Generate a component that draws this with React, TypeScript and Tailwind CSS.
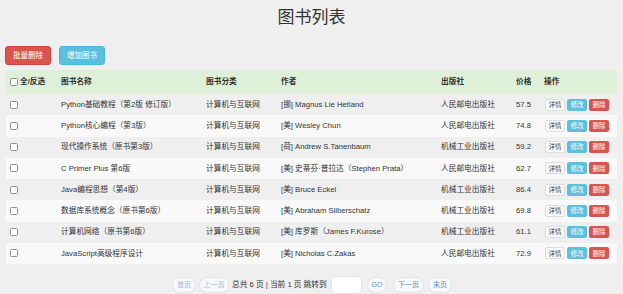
import React from "react";

interface Book {
  name: string;
  category: string;
  author: string;
  publisher: string;
  price: string;
}

const books: Book[] = [
  { name: "Python基础教程（第2版 修订版）", category: "计算机与互联网", author: "[挪] Magnus Lie Hetland", publisher: "人民邮电出版社", price: "57.5" },
  { name: "Python核心编程（第3版）", category: "计算机与互联网", author: "[美] Wesley Chun", publisher: "人民邮电出版社", price: "74.8" },
  { name: "现代操作系统（原书第3版）", category: "计算机与互联网", author: "[荷] Andrew S.Tanenbaum", publisher: "机械工业出版社", price: "59.2" },
  { name: "C Primer Plus 第6版", category: "计算机与互联网", author: "[美] 史蒂芬·普拉达（Stephen Prata）", publisher: "人民邮电出版社", price: "62.7" },
  { name: "Java编程思想（第4版）", category: "计算机与互联网", author: "[美] Bruce Eckel", publisher: "机械工业出版社", price: "86.4" },
  { name: "数据库系统概念（原书第6版）", category: "计算机与互联网", author: "[美] Abraham Silberschatz", publisher: "机械工业出版社", price: "69.8" },
  { name: "计算机网络（原书第6版）", category: "计算机与互联网", author: "[美] 库罗斯（James F.Kurose）", publisher: "机械工业出版社", price: "61.1" },
  { name: "JavaScript高级程序设计", category: "计算机与互联网", author: "[美] Nicholas C.Zakas", publisher: "人民邮电出版社", price: "72.9" },
];

const Check = () => (
  <span className="inline-block w-[8px] h-[8px] border border-[#8f8f8f] rounded-[1.5px] bg-white align-middle" />
);

const Pill = ({ label, w, faded }: { label: string; w: string; faded?: boolean }) => (
  <span
    className={`inline-flex items-center justify-center h-[16px] rounded-full bg-[#f8f8f8] border border-[#e4e4e4] text-[7px] ${w} ${
      faded ? "text-[#9bbbd8]" : "text-[#5b8fc4]"
    }`}
  >
    {label}
  </span>
);

export default function App() {
  return (
    <div className="w-[623px] h-[294px] bg-[#efefef] text-[#333] font-['Liberation_Sans','Noto_Sans_CJK_SC',sans-serif] overflow-hidden">
      <h1 className="pt-[5px] text-center text-[17px] leading-[22px] font-normal text-[#333] font-['Noto_Sans_CJK_SC',sans-serif]">
        图书列表
      </h1>

      <div className="flex gap-[8px] pl-[5px] mt-[19px]">
        <button className="w-[46px] h-[19px] rounded-[3px] bg-[#d9534f] border border-[#d43f3a] text-white text-[7.5px]">
          批量删除
        </button>
        <button className="w-[46px] h-[19px] rounded-[3px] bg-[#5bc0de] border border-[#46b8da] text-white text-[7.5px]">
          增加图书
        </button>
      </div>

      <table className="ml-[6px] mt-[5px] w-[611px] table-fixed border-collapse text-[7.7px]">
        <colgroup>
          <col className="w-[51px]" />
          <col className="w-[145px]" />
          <col className="w-[75px]" />
          <col className="w-[160px]" />
          <col className="w-[75px]" />
          <col className="w-[28px]" />
          <col className="w-[77px]" />
        </colgroup>
        <thead>
          <tr className="h-[24px] bg-[#dff0d8] font-bold text-left">
            <th className="px-[4px] whitespace-nowrap">
              <span className="flex items-center gap-[2px]">
                <Check />
                全/反选
              </span>
            </th>
            <th className="px-[4px]">图书名称</th>
            <th className="px-[4px]">图书分类</th>
            <th className="px-[4px]">作者</th>
            <th className="px-[4px]">出版社</th>
            <th className="px-[4px]">价格</th>
            <th className="px-[4px]">操作</th>
          </tr>
        </thead>
        <tbody>
          {books.map((b, i) => (
            <tr key={b.name} className={`h-[21.25px] ${i % 2 === 1 ? "bg-[#f9f9f9]" : ""}`}>
              <td className="px-[4px]">
                <span className="flex items-center">
                  <Check />
                </span>
              </td>
              <td className="px-[4px] whitespace-nowrap">{b.name}</td>
              <td className="px-[4px] whitespace-nowrap">{b.category}</td>
              <td className="px-[4px] whitespace-nowrap">{b.author}</td>
              <td className="px-[4px] whitespace-nowrap">{b.publisher}</td>
              <td className="px-[4px]">{b.price}</td>
              <td className="px-[4px]">
                <span className="flex gap-[2px] pl-[1px]">
                  <span className="w-[20px] h-[12px] flex items-center justify-center rounded-[2px] bg-white border border-[#ddd] text-[6.5px] text-[#333]">
                    详情
                  </span>
                  <span className="w-[20px] h-[12px] flex items-center justify-center rounded-[2px] bg-[#5bc0de] text-[6.5px] text-white">
                    修改
                  </span>
                  <span className="w-[20px] h-[12px] flex items-center justify-center rounded-[2px] bg-[#d9534f] text-[6.5px] text-white">
                    删除
                  </span>
                </span>
              </td>
            </tr>
          ))}
        </tbody>
      </table>

      <div className="flex items-center pl-[172px] mt-[12px] text-[7.7px]">
        <Pill label="首页" w="w-[24px]" faded />
        <span className="ml-[3px]">
          <Pill label="上一页" w="w-[30px]" faded />
        </span>
        <span className="ml-[3px] w-[96px] whitespace-nowrap">总共 6 页 | 当前 1 页 跳转到</span>
        <span className="ml-[3px] w-[31px] h-[18px] rounded-[5px] bg-white border border-[#e4e4e4]" />
        <span className="ml-[5px]">
          <Pill label="GO" w="w-[20px]" />
        </span>
        <span className="ml-[6px]">
          <Pill label="下一页" w="w-[31px]" />
        </span>
        <span className="ml-[4px]">
          <Pill label="末页" w="w-[24px]" />
        </span>
      </div>
    </div>
  );
}
